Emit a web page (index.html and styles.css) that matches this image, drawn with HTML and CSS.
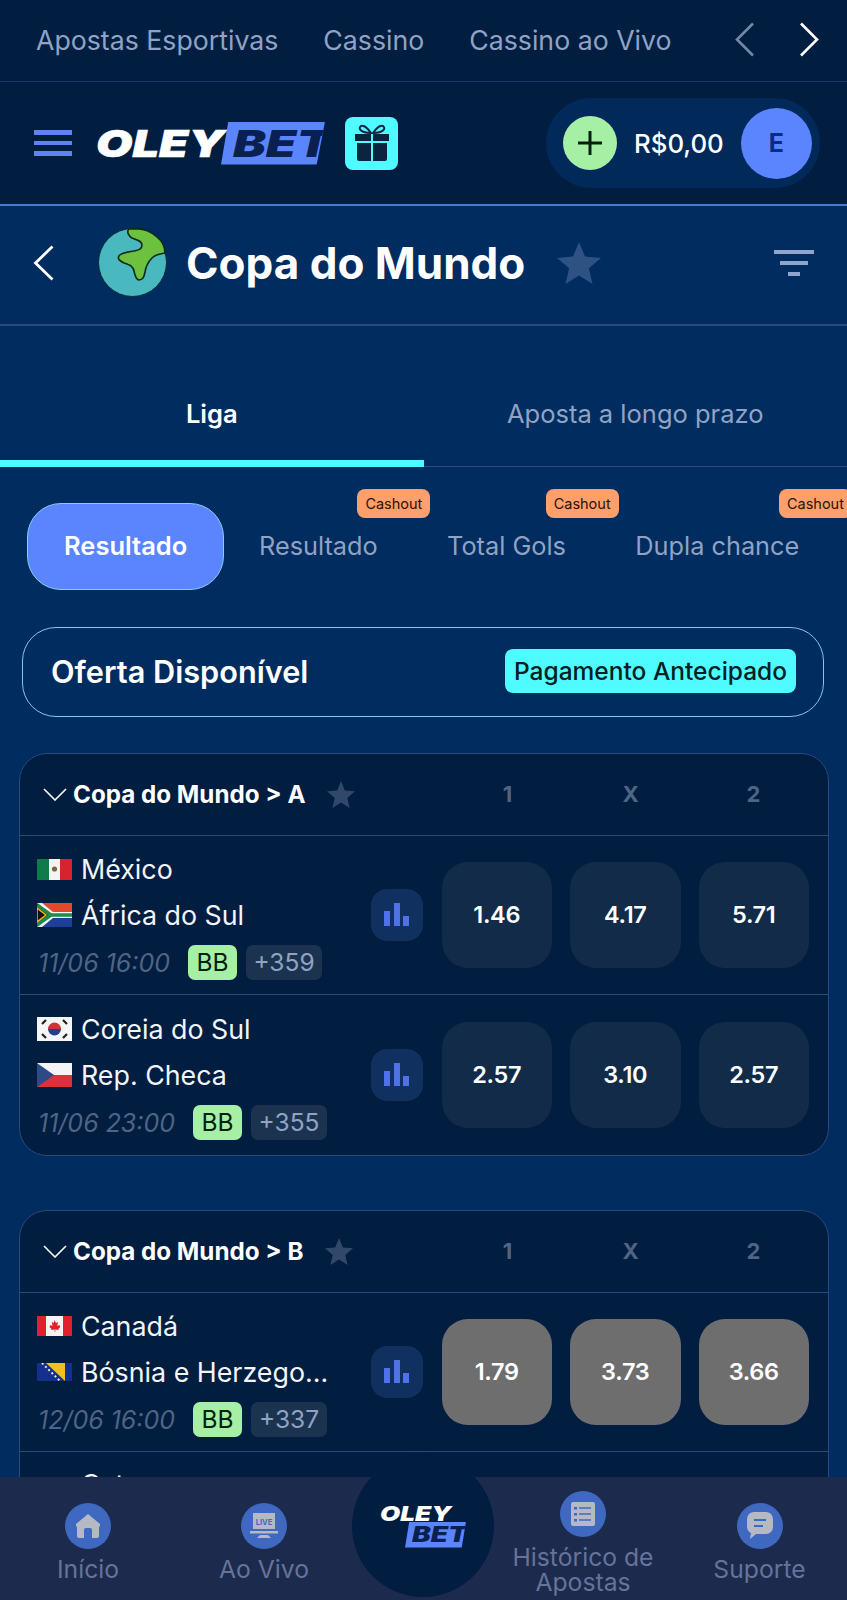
FILE: index.html
```html
<!DOCTYPE html>
<html>
    <head>
        <meta charset="UTF-8">
        <title>OleyBet - Copa do Mundo</title>
        <link rel="stylesheet" href="styles.css">
    </head>
    <body>
        <div class="page">
            <!-- menu de cima -->
            <nav class="topNav">
                <a class="topLink">Apostas Esportivas</a>
                <a class="topLink">Cassino</a>
                <a class="topLink">Cassino ao Vivo</a>
                <div class="topArrows">
                    <svg width="19" height="35" viewBox="0 0 19 35"><path d="M18 1.5 2 17.5l16 16" fill="none" stroke="#7288a8" stroke-width="2.6"/></svg>
                    <svg width="19" height="35" viewBox="0 0 19 35"><path d="M1 1.5l16 16-16 16" fill="none" stroke="#fff" stroke-width="2.6"/></svg>
                </div>
            </nav>

            <header class="header">
                <div class="burger"><span></span><span></span><span></span></div>
                <div class="logo">
                    <span class="logoOley"><span class="oleyText">OLEY</span></span>
                    <span class="logoBet"><span class="betText">BET</span></span>
                </div>
                <div class="gift">
                    <svg width="36" height="38" viewBox="0 0 36 38">
                        <path d="M17 9C13 3 9 1 7 2 4 4 6 9 17 9zM19 9c4-6 8-8 10-7 3 2 1 7-10 7z" fill="none" stroke="#0b2440" stroke-width="2"/>
                        <path d="M1 10h16v7H1zM19 10h16v7H19zM3 19h14v18H5a2 2 0 0 1-2-2zM19 19h14v16a2 2 0 0 1-2 2H19z" fill="#0b2440"/>
                    </svg>
                </div>
                <div class="balance">
                    <span class="plus">
                        <svg width="26" height="26" viewBox="0 0 26 26"><path d="M13 1v24M1 13h24" stroke="#04210f" stroke-width="3"/></svg>
                    </span>
                    <span class="amount">R$0,00</span>
                    <span class="avatar">E</span>
                </div>
            </header>

            <section class="titleBar">
                <svg class="backIcon" width="21" height="36" viewBox="0 0 21 36"><path d="M19.5 1.5 2.500 18l17 16.500" fill="none" stroke="#fff" stroke-width="2.8"/></svg>
                <svg class="globe" width="69" height="69" viewBox="0 0 69 69">
                    <circle cx="34.5" cy="34.5" r="34" fill="#4ab8bf" stroke="#0c2a30" stroke-width="1"/>
                    <path d="M31 1c-3 3 0 7 3 9 5 2 10 3 10 7 0 4-3 5-8 6-6 1-14 2-15 5-2 3 1 5 5 7 6 2 9 3 10 8 1 5 2 9 5 9 4 0 5-3 6-8 1-6 3-10 7-14 3-3 6-4 13-5 0-6-3-12-8-16-5-5-14-9-21-8-3 0-5 0-7 0z" fill="#6cc13e" stroke="#0b2a1c" stroke-width="1.6"/>
                </svg>
                <h1 class="pageTitle">Copa do Mundo</h1>
                <svg class="bigStar" width="44" height="42" viewBox="0 0 24 23"><path d="M12 0l3.300 8 8.700.7-6.600 5.700 2 8.600L12 18.400 4.600 23l2-8.600L0 8.700 8.700 8z" fill="#2f5285"/></svg>
                <div class="filterIcon"><span></span><span></span><span></span></div>
            </section>

            <section class="tabs">
                <div class="tab tabActive">Liga</div>
                <div class="tab">Aposta a longo prazo</div>
            </section>

            <section class="chips">
                <div class="chip chipActive">Resultado</div>
                <div class="chip">Resultado<span class="cashout">Cashout</span></div>
                <div class="chip">Total Gols<span class="cashout">Cashout</span></div>
                <div class="chip">Dupla chance<span class="cashout">Cashout</span></div>
            </section>

            <section class="offer">
                <span class="offerTitle">Oferta Disponível</span>
                <span class="offerTag">Pagamento Antecipado</span>
            </section>

            <!-- grupo A -->
            <section class="card">
                <div class="cardHead">
                    <svg class="downIcon" width="24" height="13" viewBox="0 0 24 13"><path d="M1 1l11 11L23 1" fill="none" stroke="#fff" stroke-width="1.6"/></svg>
                    <span class="groupName">Copa do Mundo &gt; A</span>
                    <svg class="smallStar" width="28" height="27" viewBox="0 0 24 23"><path d="M12 0l3.300 8 8.700.7-6.600 5.700 2 8.600L12 18.400 4.600 23l2-8.600L0 8.700 8.700 8z" fill="#31486a"/></svg>
                    <div class="cols"><span>1</span><span>X</span><span>2</span></div>
                </div>
                <div class="match">
                    <div class="teams">
                        <div class="team">
                            <svg class="flag" width="35" height="21" viewBox="0 0 35 21"><rect width="12" height="21" fill="#0f7a4a"/><rect x="12" width="11" height="21" fill="#f4f4f4"/><rect x="23" width="12" height="21" fill="#d8232f"/><circle cx="17.500" cy="10" r="2.600" fill="#7a6a3a"/></svg>
                            <span class="teamName">México</span>
                        </div>
                        <div class="team">
                            <svg class="flag" width="35" height="24" viewBox="0 0 35 24"><rect width="35" height="12" fill="#e04a2c"/><rect y="12" width="35" height="12" fill="#1d3f9a"/><path d="M0 0l14 12L0 24z" fill="#111"/><path d="M0 0h5l11 9h19v6H16L5 24H0l14-12z" fill="#f5f5f5"/><path d="M0 2l14 10L0 22M14 12h21" fill="none" stroke="#1f8a4c" stroke-width="3.500"/><path d="M0 5l9 7-9 7z" fill="#111" stroke="#f2b90f" stroke-width="1.500"/></svg>
                            <span class="teamName">África do Sul</span>
                        </div>
                        <div class="meta">
                            <span class="date">11/06 16:00</span>
                            <span class="bb">BB</span>
                            <span class="more">+359</span>
                        </div>
                    </div>
                    <div class="statBtn">
                        <svg width="25" height="23" viewBox="0 0 25 23"><path d="M0 8h6v15H0zM10 0h6v23h-6zM19 13h6v10h-6z" fill="#4f72e8"/></svg>
                    </div>
                    <div class="odds"><button class="odd">1.46</button><button class="odd">4.17</button><button class="odd">5.71</button></div>
                </div>
                <div class="match">
                    <div class="teams">
                        <div class="team">
                            <svg class="flag" width="35" height="24" viewBox="0 0 35 24"><rect width="35" height="24" fill="#f6f6f6"/><path d="M11 12a6.500 6.500 0 0 1 13 0z" fill="#d3303c"/><path d="M11 12a6.500 6.500 0 0 0 13 0z" fill="#23408f"/><path d="M5 7l4-4M26 3l4 4M5 17l4 4M26 21l4-4" stroke="#222" stroke-width="2.200"/></svg>
                            <span class="teamName">Coreia do Sul</span>
                        </div>
                        <div class="team">
                            <svg class="flag" width="35" height="24" viewBox="0 0 35 24"><rect width="35" height="12" fill="#f4f4f4"/><rect y="12" width="35" height="12" fill="#d8323a"/><path d="M0 0l17 12L0 24z" fill="#2b4a86"/></svg>
                            <span class="teamName">Rep. Checa</span>
                        </div>
                        <div class="meta">
                            <span class="date">11/06 23:00</span>
                            <span class="bb">BB</span>
                            <span class="more">+355</span>
                        </div>
                    </div>
                    <div class="statBtn">
                        <svg width="25" height="23" viewBox="0 0 25 23"><path d="M0 8h6v15H0zM10 0h6v23h-6zM19 13h6v10h-6z" fill="#4f72e8"/></svg>
                    </div>
                    <div class="odds"><button class="odd">2.57</button><button class="odd">3.10</button><button class="odd">2.57</button></div>
                </div>
            </section>

            <!-- grupo B -->
            <section class="card cardB">
                <div class="cardHead">
                    <svg class="downIcon" width="24" height="13" viewBox="0 0 24 13"><path d="M1 1l11 11L23 1" fill="none" stroke="#fff" stroke-width="1.6"/></svg>
                    <span class="groupName">Copa do Mundo &gt; B</span>
                    <svg class="smallStar" width="28" height="27" viewBox="0 0 24 23"><path d="M12 0l3.300 8 8.700.7-6.600 5.700 2 8.600L12 18.400 4.600 23l2-8.600L0 8.700 8.700 8z" fill="#31486a"/></svg>
                    <div class="cols"><span>1</span><span>X</span><span>2</span></div>
                </div>
                <div class="match">
                    <div class="teams">
                        <div class="team">
                            <svg class="flag" width="35" height="20" viewBox="0 0 35 20"><rect width="35" height="20" fill="#f4f4f4"/><rect width="9" height="20" fill="#e0202c"/><rect x="26" width="9" height="20" fill="#e0202c"/><path d="M17.500 4l1.500 3 2-1-.7 4 2-1 1 2-2 2 .5 1-3.500-.5V16h-.6v-2.500L14 14l.5-1-2-2 1-2 2 1-.7-4 2 1z" fill="#e0202c"/></svg>
                            <span class="teamName">Canadá</span>
                        </div>
                        <div class="team">
                            <svg class="flag" width="35" height="18" viewBox="0 0 35 18"><rect width="35" height="18" fill="#14308c"/><path d="M9 0h19v18z" fill="#f2c01e"/><path d="M5 0l18 18" stroke="#e8e8e8" stroke-width="2" stroke-dasharray="2 2.500"/></svg>
                            <span class="teamName">Bósnia e Herzego...</span>
                        </div>
                        <div class="meta">
                            <span class="date">12/06 16:00</span>
                            <span class="bb">BB</span>
                            <span class="more">+337</span>
                        </div>
                    </div>
                    <div class="statBtn">
                        <svg width="25" height="23" viewBox="0 0 25 23"><path d="M0 8h6v15H0zM10 0h6v23h-6zM19 13h6v10h-6z" fill="#4f72e8"/></svg>
                    </div>
                    <div class="odds"><button class="odd oddOff">1.79</button><button class="odd oddOff">3.73</button><button class="odd oddOff">3.66</button></div>
                </div>
                <div class="match matchCut">
                    <div class="teams">
                        <div class="team">
                            <span class="flagEmpty"></span>
                            <span class="teamName">Catar</span>
                        </div>
                    </div>
                </div>
            </section>

            <!-- barra de baixo -->
            <footer class="bottomNav">
                <div class="navItem">
                    <span class="navIcon">
                        <svg width="26" height="26" viewBox="0 0 26 26"><path d="M13 1 1 11v1c0 1 .5 2 1 2v9a2 2 0 0 0 2 2h5v-8a2 2 0 0 1 2-2h4a2 2 0 0 1 2 2v8h5a2 2 0 0 0 2-2v-9c.5 0 1-1 1-2v-1z" fill="#b5b9c4"/></svg>
                    </span>
                    <span class="navLabel">Início</span>
                </div>
                <div class="navItem">
                    <span class="navIcon">
                        <svg width="28" height="28" viewBox="0 0 28 28"><path d="M3 1h22v16H3z" fill="#b5b9c4"/><path d="M0 19h28v2.500H0z" fill="#b5b9c4"/><path d="M10 23h8l3 3H7z" fill="#b5b9c4"/><text x="14" y="12.500" class="liveText">LIVE</text></svg>
                    </span>
                    <span class="navLabel">Ao Vivo</span>
                </div>
                <div class="navCenter">
                    <div class="centerCircle">
                        <div class="miniLogo">
                            <span class="miniOley"><span class="miniOleyText">OLEY</span></span>
                            <span class="miniBet"><span class="miniBetText">BET</span></span>
                        </div>
                    </div>
                </div>
                <div class="navItem">
                    <span class="navIcon">
                        <svg width="24" height="24" viewBox="0 0 24 24"><rect width="24" height="24" rx="2" fill="#b5b9c4"/><path d="M8 6h12M8 12h12M8 18h12" stroke="#3f69c0" stroke-width="1.500"/><path d="M3 5h3v2.500H3zM3 11h3v2.500H3zM3 17h3v2.500H3z" fill="#3f69c0"/></svg>
                    </span>
                    <span class="navLabel">Histórico de<br>Apostas</span>
                </div>
                <div class="navItem">
                    <span class="navIcon">
                        <svg width="26" height="28" viewBox="0 0 26 28"><path d="M7 0h12a7 7 0 0 1 7 7v8a7 7 0 0 1-7 7H9l-6 5 1-6a7 7 0 0 1-4-6V7a7 7 0 0 1 7-7z" fill="#b5b9c4"/><path d="M7 8h12M7 14h9" stroke="#3f69c0" stroke-width="2.200"/></svg>
                    </span>
                    <span class="navLabel">Suporte</span>
                </div>
            </footer>
        </div>
    </body>
</html>
```

FILE: styles.css
```css
:root{
    --dark: #011d40;
    --blue: #012c5f;
    --line: #29497f;
    --cyan: #4ffbff;
    --royal: #5b84ff;
    --green: #a6f0a6;
    --muted: #8fa3c4;
    --dim: #4e6585;
}

*{box-sizing: border-box;}

body{
    margin: 0;
    background-color: var(--blue);
    font-family: "Inter", "Liberation Sans", sans-serif;
    color: white;
}

.page{
    position: relative;
    width: 847px;
    height: 1600px;
    overflow: hidden;
}

/*-------------menu de cima--------------*/
.topNav{
    display: flex;
    align-items: center;
    gap: 45px;
    height: 82px;
    padding-left: 36px;
    padding-bottom: 2px;
    background-color: var(--dark);
    border-bottom: 1px solid #1d3963;
}
.topLink{
    font-size: 26.7px;
    color: var(--muted);
    white-space: nowrap;
}
.topArrows{
    display: flex;
    gap: 46px;
    margin-left: auto;
    padding-right: 28px;
}

/*-------------header--------------*/
.header{
    display: flex;
    align-items: center;
    height: 124px;
    padding-left: 34px;
    background-color: var(--dark);
    border-bottom: 2px solid #4a78cf;
}
.burger{
    display: flex;
    flex-direction: column;
    gap: 6px;
    width: 38px;
}
.burger span{
    height: 4.500px;
    background-color: #5f83f0;
}
.logo{
    display: flex;
    align-items: center;
    margin-left: 24px;
    font-weight: 900;
    font-size: 37px;
    line-height: 43px;
}
.logoOley{
    width: 125px;
    font-style: italic;
    color: white;
}
/* 로고 글자가 넓어서 가로로만 늘림 */
.oleyText{
    display: inline-block;
    transform: scaleX(1.27);
    transform-origin: left center;
    -webkit-text-stroke: 0.6px white;
}
.logoBet{
    width: 104px;
    height: 43px;
    padding-left: 12px;
    font-style: italic;
    color: #0a2050;
    background-color: var(--royal);
    clip-path: polygon(7% 0, 100% 0, 92% 100%, 0 100%);
}
.betText{
    display: inline-block;
    transform: scaleX(1.33);
    transform-origin: left center;
}
.gift{
    display: flex;
    align-items: center;
    justify-content: center;
    width: 53px;
    height: 53px;
    margin-left: 20px;
    border-radius: 8px;
    background-color: var(--cyan);
}
.balance{
    display: flex;
    align-items: center;
    width: 274px;
    height: 90px;
    margin-left: auto;
    margin-right: 27px;
    padding-left: 17px;
    border-radius: 45px;
    background-color: #012a5a;
}
.plus{
    display: flex;
    align-items: center;
    justify-content: center;
    width: 54px;
    height: 54px;
    border-radius: 50%;
    background-color: var(--green);
}
.amount{
    margin-left: 17px;
    font-size: 25.8px;
    font-weight: 500;
}
.avatar{
    display: flex;
    align-items: center;
    justify-content: center;
    width: 71px;
    height: 71px;
    margin-left: 17px;
    border-radius: 50%;
    font-size: 25px;
    font-weight: 700;
    color: #0d2a80;
    background-color: var(--royal);
}

/*-------------titulo--------------*/
.titleBar{
    display: flex;
    align-items: center;
    height: 120px;
    padding-left: 33px;
    padding-bottom: 5px;
    border-bottom: 2px solid var(--line);
}
.globe{margin-left: 44px;}
.pageTitle{
    margin: 0 0 0 19px;
    font-size: 44px;
    font-weight: 700;
}
.bigStar{margin-left: 32px;}
.filterIcon{
    display: flex;
    flex-direction: column;
    align-items: center;
    gap: 7px;
    width: 40px;
    margin-left: auto;
    margin-right: 33px;
}
.filterIcon span{
    height: 4px;
    width: 100%;
    background-color: #8fa5cb;
}
.filterIcon span:nth-child(2){width: 68%;}
.filterIcon span:nth-child(3){width: 30%;}

/*-------------abas--------------*/
.tabs{display: flex;}
.tab{
    width: 50%;
    height: 141px;
    padding-top: 70px;
    line-height: 36px;
    font-size: 25.5px;
    text-align: center;
    color: var(--muted);
    border-bottom: 1px solid var(--line);
}
.tabActive{
    font-weight: 600;
    color: white;
    border-bottom: 7px solid var(--cyan);
}

/*-------------chips--------------*/
.chips{
    display: flex;
    margin: 36px 0 0 27px;
}
.chip{
    position: relative;
    flex: none;
    height: 87px;
    padding: 0 34.700px;
    line-height: 85px;
    font-size: 25.3px;
    white-space: nowrap;
    color: var(--muted);
}
.chipActive{
    border: 1.500px solid #7fd0f5;
    border-radius: 34px;
    padding: 0 36px;
    line-height: 84px;
    font-size: 25.5px;
    font-weight: 600;
    color: white;
    background-color: var(--royal);
}
.cashout{
    position: absolute;
    top: -14px;
    right: -18px;
    width: 73px;
    height: 29px;
    border-radius: 8px;
    line-height: 29px;
    font-size: 14.5px;
    text-align: center;
    color: #2a1206;
    background-color: #ff9f6b;
}

/*-------------oferta--------------*/
.offer{
    display: flex;
    align-items: center;
    justify-content: space-between;
    height: 90px;
    margin: 37px 23px 0 22px;
    padding: 0 27px 2px 28px;
    border: 1.500px solid #7fc8ef;
    border-radius: 34px;
}
.offerTitle{
    font-size: 30.7px;
    font-weight: 600;
}
.offerTag{
    width: 291px;
    height: 44px;
    border-radius: 8px;
    line-height: 44px;
    font-size: 24.5px;
    font-weight: 500;
    text-align: center;
    color: #04201f;
    background-color: var(--cyan);
}

/*-------------cards--------------*/
.card{
    margin: 36px 18px 0 19px;
    border: 1px solid var(--line);
    border-radius: 28px;
    background-color: var(--dark);
}
.cardB{margin-top: 54.500px;}
.cardHead{
    display: flex;
    align-items: center;
    height: 81.500px;
    padding-left: 23px;
    border-bottom: 1px solid var(--line);
}
.groupName{
    margin-left: 6px;
    font-size: 24.2px;
    font-weight: 700;
}
.smallStar{margin-left: 22px;}
.cols{
    display: flex;
    margin-left: auto;
    margin-right: 13px;
}
.cols span{
    width: 123px;
    font-size: 22px;
    font-weight: 700;
    text-align: center;
    color: var(--dim);
}
.match{
    display: flex;
    align-items: center;
    height: 159.500px;
    padding-right: 19px;
    border-bottom: 1px solid var(--line);
}
.match:last-child{border-bottom: none;}
.matchCut{
    align-items: flex-start;
    padding-top: 9px;
}
.teams{
    flex: 1;
    min-width: 0;
    padding-left: 17px;
    padding-bottom: 3px;
}
.team{
    display: flex;
    align-items: center;
    height: 46px;
}
.flag{flex: none;}
.flagEmpty{
    flex: none;
    width: 35px;
}
.teamName{
    margin-left: 9px;
    font-size: 26.8px;
    white-space: nowrap;
    color: #f2f5fa;
}
.meta{
    display: flex;
    align-items: center;
    margin-top: 7px;
}
.date{
    margin-left: 1px;
    font-size: 25px;
    font-style: italic;
    color: #4e6585;
}
.bb{
    width: 49px;
    height: 35px;
    margin-left: 18px;
    border-radius: 7px;
    line-height: 35px;
    font-size: 24.5px;
    text-align: center;
    color: #04210f;
    background-color: var(--green);
}
.more{
    width: 76px;
    height: 35px;
    margin-left: 9px;
    border-radius: 7px;
    line-height: 35px;
    font-size: 24.5px;
    text-align: center;
    color: #8fa3c4;
    background-color: #1c3350;
}
.statBtn{
    display: flex;
    align-items: center;
    justify-content: center;
    flex: none;
    width: 52px;
    height: 52px;
    margin-right: 19px;
    border-radius: 16px;
    background-color: #10305f;
}
.odds{
    display: flex;
    flex: none;
    gap: 18px;
}
.odd{
    width: 110.500px;
    height: 106px;
    padding: 0;
    border: none;
    border-radius: 26px;
    font-family: inherit;
    font-size: 23.5px;
    font-weight: 600;
    letter-spacing: -0.3px;
    color: white;
    background-color: #122b48;
}
.oddOff{background-color: #6e6e6e;}

/*-------------barra de baixo--------------*/
.bottomNav{
    position: absolute;
    left: 0;
    bottom: 0;
    display: grid;
    grid-template-columns: 176px 176px 142px 178px 175px;
    width: 847px;
    height: 123px;
    background-color: #1c2a4e;
}
.navItem{
    display: flex;
    flex-direction: column;
    align-items: center;
    justify-content: center;
    gap: 8px;
    padding-top: 8px;
}
.navIcon{
    display: flex;
    align-items: center;
    justify-content: center;
    width: 46px;
    height: 46px;
    border-radius: 50%;
    background-color: #3f69c0;
}
.navLabel{
    font-size: 24.7px;
    line-height: 25px;
    text-align: center;
    color: #66739a;
}
.liveText{
    font-family: "Inter", sans-serif;
    font-size: 7.500px;
    font-weight: 700;
    text-anchor: middle;
    fill: #3f69c0;
}
.navCenter{position: relative;}
.centerCircle{
    position: absolute;
    top: -22px;
    left: 0;
    display: flex;
    align-items: center;
    justify-content: center;
    width: 142px;
    height: 142px;
    border-radius: 50%;
    background-color: var(--dark);
}
.miniLogo{
    display: flex;
    flex-direction: column;
    width: 86px;
    font-weight: 900;
    font-style: italic;
}
.miniOley{
    font-size: 20.5px;
    line-height: 17px;
}
.miniOleyText{
    display: inline-block;
    transform: scaleX(1.27);
    transform-origin: left center;
}
.miniBet{
    align-self: flex-end;
    width: 61px;
    height: 26px;
    padding-left: 7px;
    font-size: 21px;
    line-height: 26px;
    color: #0a2050;
    background-color: var(--royal);
    clip-path: polygon(7% 0, 100% 0, 93% 100%, 0 100%);
}
.miniBetText{
    display: inline-block;
    transform: scaleX(1.33);
    transform-origin: left center;
}
```
